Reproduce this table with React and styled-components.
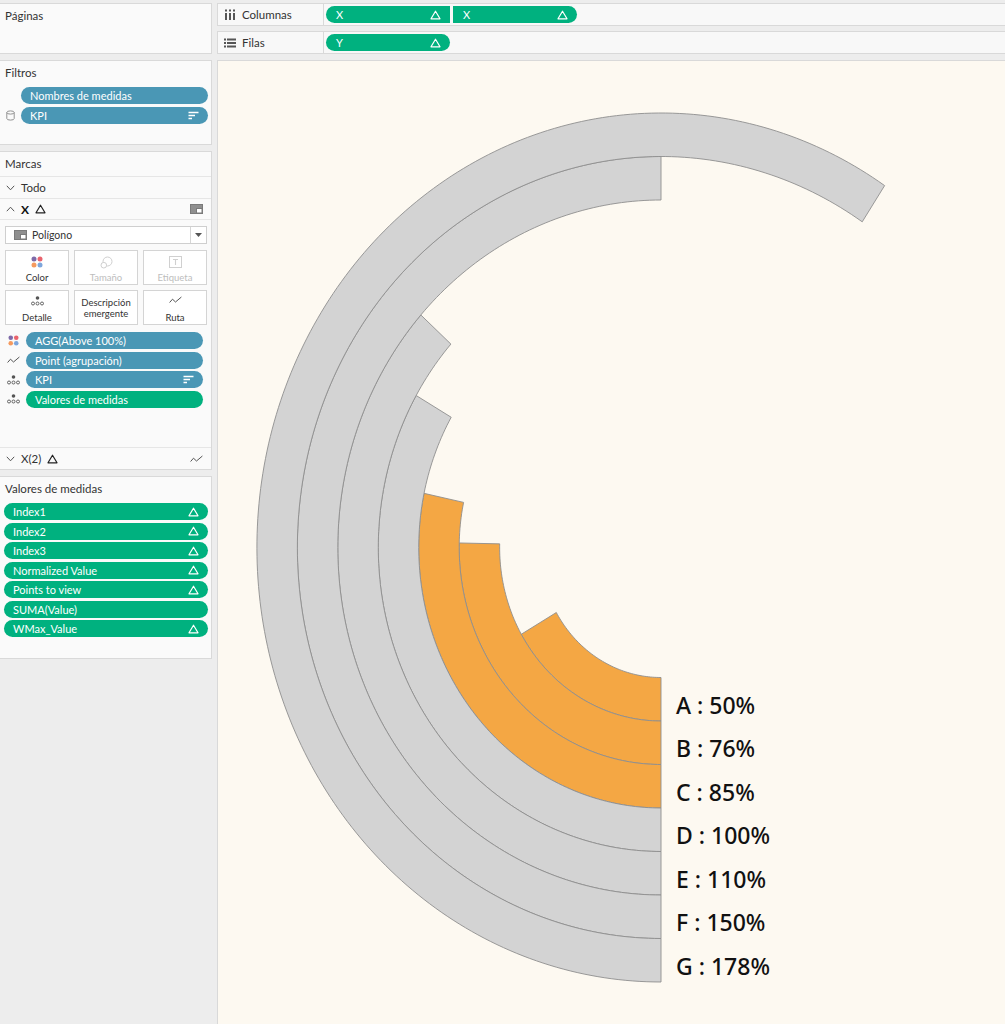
import React from 'react'
import styled, { createGlobalStyle, css } from 'styled-components'

const GlobalStyle = createGlobalStyle`
    html, body {
        margin: 0;
        padding: 0;
        background: #ededed;
    }
    * {
        box-sizing: border-box;
        font-family: Lato, "Noto Sans", Arial, sans-serif;
    }
    #root {
        height: 1024px;
        overflow: hidden;
    }
`

const BLUE = '#4a97b5'
const GREEN = '#00b17f'

const Page = styled.div`
    display: grid;
    grid-template-columns: 212px 1fr;
    column-gap: 5px;
    height: 1024px;
    overflow: hidden;
`

const Side = styled.div`
    display: flex;
    flex-direction: column;
    gap: 6px;
    padding-top: 3px;
`

const Card = styled.div`
    display: flex;
    flex-direction: column;
    height: ${p => p.$h}px;
    background: #fafafa;
    border: 1px solid #d9d9d9;
    border-left: none;
`

const CardTitle = styled.div`
    padding: 5px 5px 0;
    line-height: 14px;
    font-size: 11.5px;
    color: #333;
    ${p => p.$rule && css`
        height: 25px;
        border-bottom: 1px solid #e6e6e6;
    `}
`

const PillList = styled.div`
    display: flex;
    flex-direction: column;
    gap: ${p => p.$gap || 2.5}px;
    padding: ${p => p.$pad};
`

const PillRow = styled.div`
    display: flex;
    align-items: center;
`

const IconSlot = styled.div`
    width: ${p => p.$w}px;
    flex: none;
    display: flex;
    justify-content: center;
    align-items: center;
    color: #666;
`

const Pill = styled.div`
    flex: 1 0 auto;
    display: flex;
    align-items: center;
    justify-content: space-between;
    height: 17px;
    padding: 0 9px 0 ${p => p.$left || 9}px;
    background: ${p => (p.$green ? GREEN : BLUE)};
    color: #fff;
    font-size: 11px;
    border-radius: ${p => p.$radius || '9px'};
    white-space: nowrap;
    ${p => p.$w && css`
        flex: none;
        width: ${p.$w}px;
    `}
`

const MarkRow = styled.div`
    display: flex;
    align-items: center;
    gap: 6px;
    height: ${p => p.$h}px;
    padding: 0 8px 0 6px;
    font-size: 11.5px;
    color: #333;
    border-${p => p.$top ? 'top' : 'bottom'}: 1px solid #e6e6e6;
`

const Grow = styled.div`
    flex: 1;
`

const Bold = styled.span`
    font-weight: 700;
    font-size: 12px;
    color: #111;
`

const MarkBody = styled.div`
    display: flex;
    flex-direction: column;
    gap: 6px;
    padding: 6px 4px 0 5px;
`

const Dropdown = styled.div`
    display: flex;
    align-items: center;
    height: 18px;
    background: #fff;
    border: 1px solid #cfcfcf;
    font-size: 10.5px;
    color: #333;
`

const DropLabel = styled.div`
    flex: 1;
    display: flex;
    align-items: center;
    gap: 5px;
    padding-left: 8px;
`

const DropArrow = styled.div`
    width: 16px;
    height: 100%;
    border-left: 1px solid #d6d6d6;
    display: flex;
    align-items: center;
    justify-content: center;
`

const ButtonGrid = styled.div`
    display: grid;
    grid-template-columns: repeat(3, 64px);
    grid-auto-rows: 35px;
    column-gap: 5px;
    row-gap: 5px;
`

const MarkButton = styled.div`
    display: flex;
    flex-direction: column;
    align-items: center;
    justify-content: ${p => (p.$text ? 'center' : 'space-between')};
    padding: ${p => (p.$text ? '0' : '5px 0 1px')};
    background: #fff;
    border: 1px solid #d4d4d4;
    font-size: 9.5px;
    line-height: 11px;
    text-align: center;
    color: ${p => (p.$faded ? '#bdbdbd' : '#333')};
`

const Main = styled.div`
    display: flex;
    flex-direction: column;
    gap: 5px;
    padding-top: 3px;
    min-width: 0;
`

const Shelf = styled.div`
    display: flex;
    height: 23px;
    background: #f8f8f8;
    border: 1px solid #d9d9d9;
    border-right: none;
`

const ShelfLabel = styled.div`
    width: 106px;
    flex: none;
    display: flex;
    align-items: center;
    gap: 6px;
    padding-left: 6px;
    font-size: 11.5px;
    color: #333;
    border-right: 1px solid #d9d9d9;
`

const ShelfPills = styled.div`
    display: flex;
    align-items: center;
    gap: 3px;
    padding-left: 2px;
`

const ChartPanel = styled.div`
    flex: 1;
    margin-top: 1px;
    background: #fdf9f1;
    border: 1px solid #d9d9d9;
    border-right: none;
    overflow: hidden;
`

const ChartLabel = styled.text`
    font-family: "Noto Sans", Lato, sans-serif;
    font-size: 23px;
    font-weight: 500;
    fill: #111;
`

/* icons */

const Delta = ({ color = '#fff' }) => (
    <svg width="11" height="10" viewBox="0 0 11 10">
        <path d="M5.5 1.2 L10 8.8 L1 8.8 Z" fill="none" stroke={color} strokeWidth="1.2" strokeLinejoin="round" />
    </svg>
)

const SortIcon = () => (
    <svg width="11" height="9" viewBox="0 0 11 9">
        <path d="M0.5 1.5 H10.5 M0.5 4.5 H7 M0.5 7.5 H4" stroke="#fff" strokeWidth="1.5" />
    </svg>
)

const Chevron = ({ up }) => (
    <svg width="9" height="6" viewBox="0 0 9 6">
        <path d={up ? 'M0.8 5.2 L4.5 1.2 L8.2 5.2' : 'M0.8 0.8 L4.5 4.8 L8.2 0.8'} fill="none" stroke="#555" strokeWidth="1" />
    </svg>
)

const DbIcon = () => (
    <svg width="9" height="11" viewBox="0 0 9 11">
        <ellipse cx="4.5" cy="2.5" rx="3.7" ry="1.6" fill="none" stroke="#888" strokeWidth="0.9" />
        <path d="M0.8 2.5 V8.5 A3.7 1.6 0 0 0 8.2 8.5 V2.5" fill="none" stroke="#888" strokeWidth="0.9" />
    </svg>
)

const PolygonIcon = () => (
    <svg width="13" height="10" viewBox="0 0 13 10">
        <rect x="0.5" y="0.5" width="12" height="9" fill="#8f8f8f" stroke="#7a7a7a" strokeWidth="1" />
        <rect x="6.5" y="4.5" width="5.5" height="4.5" fill="#fff" stroke="#7a7a7a" strokeWidth="1" />
    </svg>
)

const ColorDots = ({ size = 12 }) => (
    <svg width={size} height={size} viewBox="0 0 12 12">
        <circle cx="3" cy="3" r="2.5" fill="#7e6aa8" />
        <circle cx="9" cy="3" r="2.5" fill="#e9636d" />
        <circle cx="3" cy="9" r="2.5" fill="#f59a5f" />
        <circle cx="9" cy="9" r="2.5" fill="#7ea6dc" />
    </svg>
)

const SizeIcon = () => (
    <svg width="13" height="13" viewBox="0 0 13 13">
        <circle cx="7.5" cy="5.5" r="4.5" fill="none" stroke="#cfcfcf" strokeWidth="1" />
        <circle cx="3.8" cy="9.2" r="2.8" fill="#fff" stroke="#cfcfcf" strokeWidth="1" />
    </svg>
)

const LabelIcon = () => (
    <svg width="13" height="12" viewBox="0 0 13 12">
        <rect x="0.5" y="0.5" width="12" height="11" fill="none" stroke="#d0d0d0" strokeWidth="1" />
        <path d="M4 3.5 H9 M6.5 3.5 V9" stroke="#d0d0d0" strokeWidth="1.1" />
    </svg>
)

const DetailIcon = ({ color = '#555' }) => (
    <svg width="13" height="10" viewBox="0 0 13 10">
        <circle cx="6.5" cy="2" r="1.8" fill={color} />
        <circle cx="2" cy="7.5" r="1.5" fill="none" stroke={color} strokeWidth="0.9" />
        <circle cx="6.5" cy="7.5" r="1.5" fill="none" stroke={color} strokeWidth="0.9" />
        <circle cx="11" cy="7.5" r="1.5" fill="none" stroke={color} strokeWidth="0.9" />
    </svg>
)

const PathIcon = ({ color = '#555' }) => (
    <svg width="13" height="8" viewBox="0 0 13 8">
        <path d="M0.6 6.5 L3.5 3.2 L6.5 6 L12.4 1" fill="none" stroke={color} strokeWidth="1" strokeLinejoin="round" />
    </svg>
)

const ColumnsIcon = () => (
    <svg width="12" height="11" viewBox="0 0 12 11">
        {[1, 5, 9].map(x => (
            <g key={x} fill="#555">
                <rect x={x} y="0.5" width="2" height="2" />
                <rect x={x} y="4" width="2" height="7" />
            </g>
        ))}
    </svg>
)

const RowsIcon = () => (
    <svg width="12" height="10" viewBox="0 0 12 10">
        {[0.5, 4, 7.5].map(y => (
            <g key={y} fill="#555">
                <rect x="0" y={y} width="2" height="2" />
                <rect x="3" y={y} width="9" height="2" />
            </g>
        ))}
    </svg>
)

const Caret = () => (
    <svg width="7" height="4" viewBox="0 0 7 4">
        <path d="M0 0 H7 L3.5 4 Z" fill="#555" />
    </svg>
)

/* chart */

const CX = 443
const CY = 486.5
const SX = 0.93
const R0 = 130
const BAND = 43.5
const DEG_PER_PCT = 1.2

const kpis = [
    { name: 'A', pct: 50 },
    { name: 'B', pct: 76 },
    { name: 'C', pct: 85 },
    { name: 'D', pct: 100 },
    { name: 'E', pct: 110 },
    { name: 'F', pct: 150 },
    { name: 'G', pct: 178 },
]

function pt(r, t) {
    return (CX - SX * r * Math.sin(t)).toFixed(2) + ' ' + (CY + r * Math.cos(t)).toFixed(2)
}

function ringPath(r1, r2, deg) {
    const n = Math.max(2, Math.ceil(deg))
    const end = (deg * Math.PI) / 180
    const pts = []
    for (let i = 0; i <= n; i++) pts.push(pt(r2, (end * i) / n))
    for (let i = n; i >= 0; i--) pts.push(pt(r1, (end * i) / n))
    return 'M' + pts.join(' L') + ' Z'
}

function RadialChart() {
    return (
        <svg width="788" height="963" viewBox="0 0 788 963">
            {kpis.map((k, i) => {
                const r1 = R0 + i * BAND
                return (
                    <path
                        key={k.name}
                        d={ringPath(r1, r1 + BAND, k.pct * DEG_PER_PCT)}
                        fill={k.pct < 100 ? '#f4a744' : '#d3d3d3'}
                        stroke="#8e8e8e"
                        strokeWidth="0.9"
                    />
                )
            })}
            {kpis.map((k, i) => (
                <ChartLabel key={k.name} x="458" y={CY + R0 + i * BAND + BAND / 2 + 14.5}>
                    {k.name} : {k.pct}%
                </ChartLabel>
            ))}
        </svg>
    )
}

const markPills = [
    { icon: <ColorDots size={11} />, text: 'AGG(Above 100%)' },
    { icon: <PathIcon />, text: 'Point (agrupación)' },
    { icon: <DetailIcon />, text: 'KPI', sort: true },
    { icon: <DetailIcon />, text: 'Valores de medidas', green: true },
]

const measures = [
    ['Index1', true],
    ['Index2', true],
    ['Index3', true],
    ['Normalized Value', true],
    ['Points to view', true],
    ['SUMA(Value)', false],
    ['WMax_Value', true],
]

export default function App() {
    return (
        <>
            <GlobalStyle />
            <Page>
                <Side>
                    <Card $h={51}>
                        <CardTitle>Páginas</CardTitle>
                    </Card>

                    <Card $h={85}>
                        <CardTitle>Filtros</CardTitle>
                        <PillList $pad="7px 3px 0 0" $gap={3}>
                            <PillRow>
                                <IconSlot $w={21} />
                                <Pill>Nombres de medidas</Pill>
                            </PillRow>
                            <PillRow>
                                <IconSlot $w={21}><DbIcon /></IconSlot>
                                <Pill>KPI<SortIcon /></Pill>
                            </PillRow>
                        </PillList>
                    </Card>

                    <Card $h={319}>
                        <CardTitle $rule>Marcas</CardTitle>
                        <MarkRow $h={22}>
                            <Chevron />
                            <span>Todo</span>
                        </MarkRow>
                        <MarkRow $h={21}>
                            <Chevron up />
                            <Bold>X</Bold>
                            <Delta color="#222" />
                            <Grow />
                            <PolygonIcon />
                        </MarkRow>
                        <MarkBody>
                            <Dropdown>
                                <DropLabel><PolygonIcon />Polígono</DropLabel>
                                <DropArrow><Caret /></DropArrow>
                            </Dropdown>
                            <ButtonGrid>
                                <MarkButton><ColorDots />Color</MarkButton>
                                <MarkButton $faded><SizeIcon />Tamaño</MarkButton>
                                <MarkButton $faded><LabelIcon />Etiqueta</MarkButton>
                                <MarkButton><DetailIcon />Detalle</MarkButton>
                                <MarkButton $text>Descripción<br />emergente</MarkButton>
                                <MarkButton><PathIcon />Ruta</MarkButton>
                            </ButtonGrid>
                        </MarkBody>
                        <PillList $pad="7px 8px 0 0">
                            {markPills.map(p => (
                                <PillRow key={p.text}>
                                    <IconSlot $w={26}>{p.icon}</IconSlot>
                                    <Pill $green={p.green}>
                                        {p.text}
                                        {p.sort && <SortIcon />}
                                    </Pill>
                                </PillRow>
                            ))}
                        </PillList>
                        <Grow />
                        <MarkRow $h={22} $top>
                            <Chevron />
                            <span>X(2)</span>
                            <Delta color="#222" />
                            <Grow />
                            <PathIcon />
                        </MarkRow>
                    </Card>

                    <Card $h={183}>
                        <CardTitle>Valores de medidas</CardTitle>
                        <PillList $pad="7px 3px 0 4px">
                            {measures.map(([name, delta]) => (
                                <Pill key={name} $green>
                                    {name}
                                    {delta && <Delta />}
                                </Pill>
                            ))}
                        </PillList>
                    </Card>
                </Side>

                <Main>
                    <Shelf>
                        <ShelfLabel><ColumnsIcon />Columnas</ShelfLabel>
                        <ShelfPills>
                            <Pill $green $w={124} $left={10} $radius="9px 0 0 9px">X<Delta /></Pill>
                            <Pill $green $w={124} $left={10} $radius="0 9px 9px 0">X<Delta /></Pill>
                        </ShelfPills>
                    </Shelf>
                    <Shelf>
                        <ShelfLabel><RowsIcon />Filas</ShelfLabel>
                        <ShelfPills>
                            <Pill $green $w={124} $left={10}>Y<Delta /></Pill>
                        </ShelfPills>
                    </Shelf>
                    <ChartPanel>
                        <RadialChart />
                    </ChartPanel>
                </Main>
            </Page>
        </>
    )
}
